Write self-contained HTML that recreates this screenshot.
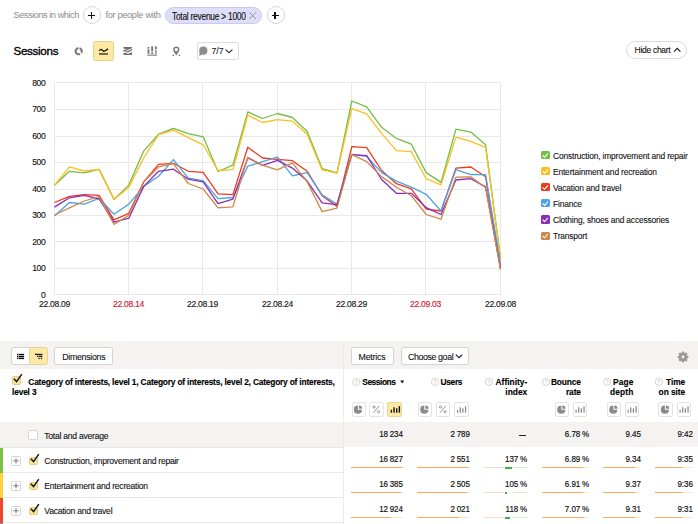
<!DOCTYPE html>
<html><head><meta charset="utf-8">
<style>
html,body{margin:0;padding:0;}
body{width:698px;height:524px;overflow:hidden;position:relative;background:#fff;font-family:"Liberation Sans",sans-serif;color:#000;}
.a{position:absolute;white-space:nowrap;line-height:1;}
.chart,.ico{position:absolute;left:0;top:0;}
.gray{color:#8c8c8c;}
.circ{position:absolute;width:18px;height:18px;border:1px solid #d6d6d6;border-radius:50%;box-sizing:border-box;background:#fff;}
.circ:before{content:"";position:absolute;left:4px;top:7.3px;width:7.2px;height:1.3px;background:#111;}
.circ:after{content:"";position:absolute;left:6.95px;top:4.35px;width:1.3px;height:7.2px;background:#111;}
.pill{position:absolute;left:165px;top:7px;width:97px;height:17px;box-sizing:border-box;border:1px solid #c9c9f2;background:#dedef9;border-radius:9px;}
.btn{position:absolute;box-sizing:border-box;border:1px solid #d3d3d3;border-radius:2.5px;background:#fff;}
.legend .it{position:absolute;left:541px;height:10px;}
.legend .cb{position:absolute;left:0;top:0;width:8.5px;height:8.2px;border-radius:1.5px;}
.legend .tx{position:absolute;white-space:nowrap;left:12px;top:-0.2px;font-size:8.4px;color:#111;-webkit-text-stroke:0.1px #111;letter-spacing:-0.15px;line-height:1.2;}
.toolbar{position:absolute;left:0;top:341px;width:698px;height:28px;background:#f4f3f1;}
.vline{position:absolute;left:342.6px;top:341px;width:1px;height:183px;background:#ebebeb;}
.totrow{position:absolute;left:0;top:422px;width:698px;height:25px;background:#f4f3f1;}
.hl{position:absolute;left:0;width:343px;height:1px;background:#e8e8e8;}
.strip{position:absolute;left:0;width:2.5px;height:25px;}
.txt{position:absolute;font-size:8.6px;letter-spacing:-0.26px;color:#111;-webkit-text-stroke:0.1px #111;white-space:nowrap;line-height:1;}
.num{position:absolute;font-size:9.9px;letter-spacing:0px;-webkit-text-stroke:0.2px #111;transform:scaleX(0.81);transform-origin:100% 0;color:#111;text-align:right;white-space:nowrap;line-height:1;width:60px;}
.bar{position:absolute;height:2px;background:#f9a862;}
.barl{position:absolute;height:2px;background:#fde4cf;}
.mh{position:absolute;font-size:8.4px;font-weight:bold;color:#000;-webkit-text-stroke:0.12px #000;white-space:nowrap;line-height:10px;}
.sb{position:absolute;top:402px;width:14.5px;height:14.5px;box-sizing:border-box;border:1px solid #e3e3e3;border-radius:2px;background:#fff;}
.ex{position:absolute;left:11px;width:9.5px;height:9.5px;box-sizing:border-box;border:1px solid #d4d4d4;border-radius:1.5px;background:#fff;}
.ck{position:absolute;left:29px;width:8.5px;height:8.5px;box-sizing:border-box;border:1px solid #e6cf7c;border-radius:1.5px;background:#f9e49b;}
</style></head><body>

<svg class="chart" width="698" height="330" viewBox="0 0 698 330">
<g stroke="#e8e8e8" stroke-width="1"><line x1="54" y1="294.5" x2="501" y2="294.5"/><line x1="54" y1="268.5" x2="501" y2="268.5"/><line x1="54" y1="241.5" x2="501" y2="241.5"/><line x1="54" y1="215.5" x2="501" y2="215.5"/><line x1="54" y1="189.5" x2="501" y2="189.5"/><line x1="54" y1="162.5" x2="501" y2="162.5"/><line x1="54" y1="136.5" x2="501" y2="136.5"/><line x1="54" y1="109.5" x2="501" y2="109.5"/><line x1="54" y1="82.5" x2="501" y2="82.5"/><line x1="54.5" y1="82" x2="54.5" y2="295"/><line x1="128.5" y1="82" x2="128.5" y2="295"/><line x1="202.5" y1="82" x2="202.5" y2="295"/><line x1="277.5" y1="82" x2="277.5" y2="295"/><line x1="351.5" y1="82" x2="351.5" y2="295"/><line x1="425.5" y1="82" x2="425.5" y2="295"/><line x1="500.5" y1="82" x2="500.5" y2="295"/></g>
<g font-family="Liberation Sans, sans-serif" font-size="8.6" letter-spacing="-0.3" fill="#111" stroke="#111" stroke-width="0.12"><text x="45.6" y="297.7" text-anchor="end">0</text><text x="45.6" y="271.2" text-anchor="end">100</text><text x="45.6" y="244.7" text-anchor="end">200</text><text x="45.6" y="218.2" text-anchor="end">300</text><text x="45.6" y="191.7" text-anchor="end">400</text><text x="45.6" y="165.2" text-anchor="end">500</text><text x="45.6" y="138.7" text-anchor="end">600</text><text x="45.6" y="112.2" text-anchor="end">700</text><text x="45.6" y="85.7" text-anchor="end">800</text><text x="54.5" y="307" text-anchor="middle">22.08.09</text><text x="128.5" y="307" text-anchor="middle" fill="#d0112b" stroke="#d0112b">22.08.14</text><text x="202.5" y="307" text-anchor="middle">22.08.19</text><text x="277.5" y="307" text-anchor="middle">22.08.24</text><text x="351.5" y="307" text-anchor="middle">22.08.29</text><text x="425.5" y="307" text-anchor="middle" fill="#d0112b" stroke="#d0112b">22.09.03</text><text x="500.5" y="307" text-anchor="middle">22.09.08</text></g>
<polyline fill="none" stroke="#72bf44" stroke-width="1.3" stroke-linejoin="round" points="54.5,185.3 69.4,171.3 84.2,172.9 99.1,169.4 114.0,199.4 128.8,185.1 143.7,151.1 158.6,134.2 173.4,128.3 188.3,133.6 203.2,136.8 218.0,171.5 232.9,165.2 247.8,111.9 262.6,118.5 277.5,113.5 292.4,117.5 307.2,131.5 322.1,168.6 337.0,172.9 351.8,101.0 366.7,106.9 381.6,127.3 396.4,138.4 411.3,144.2 426.2,172.6 441.0,182.4 455.9,129.1 470.8,132.1 485.6,144.8 500.5,258.7"/>
<polyline fill="none" stroke="#fbbf1f" stroke-width="1.3" stroke-linejoin="round" points="54.5,185.3 69.4,166.8 84.2,171.0 99.1,169.4 114.0,199.4 128.8,187.4 143.7,158.0 158.6,134.7 173.4,130.2 188.3,137.6 203.2,144.8 218.0,170.5 232.9,169.7 247.8,115.1 262.6,122.5 277.5,119.6 292.4,121.2 307.2,134.2 322.1,169.9 337.0,173.1 351.8,108.7 366.7,113.8 381.6,133.4 396.4,150.6 411.3,151.7 426.2,178.7 441.0,184.8 455.9,137.1 470.8,141.3 485.6,147.4 500.5,257.9"/>
<polyline fill="none" stroke="#f0391b" stroke-width="1.3" stroke-linejoin="round" points="54.5,202.5 69.4,196.4 84.2,194.6 99.1,195.4 114.0,219.8 128.8,213.4 143.7,181.9 158.6,164.4 173.4,163.3 188.3,171.3 203.2,172.3 218.0,193.8 232.9,194.6 247.8,147.2 262.6,158.0 277.5,159.3 292.4,160.7 307.2,171.3 322.1,195.7 337.0,206.5 351.8,146.6 366.7,147.7 381.6,170.5 396.4,183.7 411.3,188.8 426.2,209.2 441.0,211.0 455.9,168.1 470.8,167.0 485.6,176.8 500.5,268.0"/>
<polyline fill="none" stroke="#4ca3e6" stroke-width="1.3" stroke-linejoin="round" points="54.5,216.1 69.4,202.5 84.2,204.1 99.1,198.3 114.0,214.2 128.8,204.1 143.7,186.4 158.6,176.3 173.4,159.6 188.3,178.2 203.2,180.6 218.0,198.6 232.9,197.5 247.8,166.2 262.6,161.7 277.5,157.2 292.4,175.8 307.2,172.6 322.1,194.9 337.0,204.1 351.8,154.3 366.7,156.4 381.6,172.6 396.4,181.1 411.3,187.2 426.2,194.3 441.0,211.0 455.9,169.7 470.8,174.7 485.6,174.7 500.5,264.0"/>
<polyline fill="none" stroke="#8c2bb5" stroke-width="1.3" stroke-linejoin="round" points="54.5,207.1 69.4,197.8 84.2,195.4 99.1,198.8 114.0,222.2 128.8,218.2 143.7,186.4 158.6,171.3 173.4,169.2 188.3,179.2 203.2,181.9 218.0,203.6 232.9,199.1 247.8,158.0 262.6,165.4 277.5,160.4 292.4,168.1 307.2,181.1 322.1,202.8 337.0,204.7 351.8,154.6 366.7,155.6 381.6,179.5 396.4,193.3 411.3,193.3 426.2,207.6 441.0,214.5 455.9,180.0 470.8,178.7 485.6,186.9 500.5,268.5"/>
<polyline fill="none" stroke="#d0884a" stroke-width="1.3" stroke-linejoin="round" points="54.5,215.0 69.4,207.8 84.2,201.0 99.1,196.7 114.0,224.5 128.8,215.3 143.7,182.1 158.6,166.8 173.4,163.6 188.3,183.5 203.2,189.0 218.0,207.8 232.9,206.8 247.8,157.2 262.6,165.4 277.5,169.9 292.4,162.8 307.2,181.9 322.1,211.6 337.0,208.1 351.8,154.6 366.7,161.7 381.6,176.6 396.4,187.2 411.3,195.7 426.2,214.5 441.0,219.2 455.9,177.1 470.8,176.8 485.6,187.7 500.5,269.6"/>
</svg>

<!-- top row -->
<div class="a gray" style="left:13.5px;top:10.5px;font-size:9.2px;letter-spacing:-0.45px;">Sessions in which</div>
<div class="circ" style="left:83px;top:6.4px;"></div>
<div class="a gray" style="left:105.5px;top:10.5px;font-size:9.2px;letter-spacing:-0.32px;">for people with</div>
<div class="pill"></div>
<div class="a" style="left:172px;top:11.7px;font-size:10px;color:#111;letter-spacing:-0.3px;-webkit-text-stroke:0.15px #111;transform:scaleX(0.84);transform-origin:0 0;">Total revenue &gt; 1000</div>
<div class="circ" style="left:266.5px;top:6.4px;"></div>

<!-- second row -->
<div class="a" style="left:13.5px;top:45.3px;font-size:11.6px;color:#000;letter-spacing:-0.3px;-webkit-text-stroke:0.35px #000;">Sessions</div>
<div class="btn" style="left:93px;top:41px;width:21px;height:20px;background:#fde9a6;border-color:#e6d185;"></div>
<div class="btn" style="left:196.5px;top:42px;width:42px;height:17.5px;border-color:#dcdcdc;"></div>
<div class="a" style="left:211.5px;top:46.5px;font-size:8.6px;color:#111;-webkit-text-stroke:0.1px #111;">7/7</div>
<div class="btn" style="left:626px;top:41px;width:60.5px;height:18px;border-radius:9px;border-color:#dadada;"></div>
<div class="a" style="left:634.5px;top:45.5px;font-size:8.6px;color:#111;letter-spacing:-0.33px;-webkit-text-stroke:0.1px #111;">Hide chart</div>

<div class="legend">
<div class="it" style="top:151px"><div class="cb" style="background:#72bf44"></div><div class="tx">Construction, improvement and repair</div></div>
<div class="it" style="top:167px"><div class="cb" style="background:#fbbf1f"></div><div class="tx">Entertainment and recreation</div></div>
<div class="it" style="top:183px"><div class="cb" style="background:#f0391b"></div><div class="tx">Vacation and travel</div></div>
<div class="it" style="top:199.2px"><div class="cb" style="background:#4ca3e6"></div><div class="tx">Finance</div></div>
<div class="it" style="top:215.4px"><div class="cb" style="background:#8c2bb5"></div><div class="tx">Clothing, shoes and accessories</div></div>
<div class="it" style="top:231.6px"><div class="cb" style="background:#d0884a"></div><div class="tx">Transport</div></div>
</div>

<!-- table toolbar -->
<div class="toolbar"></div>
<div class="btn" style="left:11px;top:347px;width:19px;height:18px;border-radius:3px 0 0 3px;"></div>
<div class="btn" style="left:29px;top:347px;width:19px;height:18px;border-radius:0 3px 3px 0;background:#fde9a6;border-color:#e8d48e;"></div>
<div class="btn" style="left:54px;top:347px;width:59px;height:18px;"></div>
<div class="txt" style="left:62.3px;top:353px;font-size:8.8px;letter-spacing:-0.3px;">Dimensions</div>
<div class="btn" style="left:351px;top:347px;width:42.5px;height:18px;"></div>
<div class="txt" style="left:358.5px;top:353px;font-size:8.8px;letter-spacing:-0.2px;">Metrics</div>
<div class="btn" style="left:400.5px;top:347px;width:68px;height:18px;"></div>
<div class="txt" style="left:408px;top:353px;font-size:8.8px;letter-spacing:-0.38px;">Choose goal</div>
<div class="vline"></div>

<!-- header -->
<div class="ck" style="left:12px;top:376.1px;width:8.7px;height:8.8px;"></div>
<div class="mh" style="left:28.3px;top:376.9px;letter-spacing:-0.2px;">Category of interests, level 1, Category of interests, level 2, Category of interests,</div>
<div class="mh" style="left:12px;top:386.9px;letter-spacing:-0.17px;">level 3</div>

<div class="mh" style="left:362.3px;top:376.9px;letter-spacing:-0.46px;">Sessions</div>
<div class="mh" style="left:440.6px;top:376.9px;letter-spacing:-0.35px;">Users</div>
<div class="mh" style="right:170.8px;top:376.9px;text-align:right;letter-spacing:0px;">Affinity-<br>index</div>
<div class="mh" style="right:117.2px;top:376.9px;text-align:right;letter-spacing:-0.14px;">Bounce<br>rate</div>
<div class="mh" style="right:64.6px;top:376.9px;text-align:right;letter-spacing:0.1px;">Page<br>depth</div>
<div class="mh" style="right:12.8px;top:376.9px;text-align:right;letter-spacing:-0.05px;">Time<br>on site</div>

<div class="sb" style="left:351.5px;"></div><div class="sb" style="left:369px;"></div><div class="sb" style="left:387px;background:#fde9a6;border-color:#ead68f;"></div>
<div class="sb" style="left:417.5px;"></div><div class="sb" style="left:435.5px;"></div><div class="sb" style="left:454px;"></div>
<div class="sb" style="left:554.5px;"></div><div class="sb" style="left:572.5px;"></div>
<div class="sb" style="left:606.5px;"></div><div class="sb" style="left:624.5px;"></div>
<div class="sb" style="left:658px;"></div><div class="sb" style="left:676.5px;"></div>

<!-- rows -->
<div class="totrow"></div>
<div class="hl" style="top:447px;"></div>
<div class="hl" style="top:472px;"></div>
<div class="hl" style="top:497px;"></div>
<div class="hl" style="top:522px;"></div>
<div class="vline" style="top:369px;height:155px;"></div>

<div class="strip" style="top:447.5px;background:#7cc142;"></div>
<div class="strip" style="top:472.5px;background:#ffd13b;"></div>
<div class="strip" style="top:497.5px;background:#f1462b;"></div>
<div class="strip" style="top:522.5px;background:#4ca3e6;"></div>

<div class="ex" style="left:28.2px;top:430px;width:9.6px;height:9.6px;border-color:#d6d6d6;border-radius:2px;"></div>
<div class="txt" style="left:44.3px;top:431.6px;">Total and average</div>
<div class="num" style="left:343px;top:429.0px;">18&#8239;234</div>
<div class="num" style="left:409.5px;top:429.0px;">2&#8239;789</div>
<div style="position:absolute;left:519.2px;top:434.6px;width:7px;height:1.3px;background:#222;"></div>
<div class="num" style="left:529px;top:429.0px;">6.78&#8239;%</div>
<div class="num" style="left:580.5px;top:429.0px;">9.45</div>
<div class="num" style="left:632.5px;top:429.0px;">9:42</div>

<div class="ex" style="top:456px;"></div><div class="ck" style="top:456.5px;"></div>
<div class="txt" style="left:44.3px;top:457px;">Construction, improvement and repair</div>
<div class="num" style="left:343px;top:453.5px;">16&#8239;827</div>
<div class="num" style="left:409.5px;top:453.5px;">2&#8239;551</div>
<div class="num" style="left:467px;top:453.5px;">137&#8239;%</div>
<div class="num" style="left:529px;top:453.5px;">6.89&#8239;%</div>
<div class="num" style="left:580.5px;top:453.5px;">9.34</div>
<div class="num" style="left:632.5px;top:453.5px;">9:35</div>

<div class="ex" style="top:481px;"></div><div class="ck" style="top:481.5px;"></div>
<div class="txt" style="left:44.3px;top:482px;">Entertainment and recreation</div>
<div class="num" style="left:343px;top:478.5px;">16&#8239;385</div>
<div class="num" style="left:409.5px;top:478.5px;">2&#8239;505</div>
<div class="num" style="left:467px;top:478.5px;">105&#8239;%</div>
<div class="num" style="left:529px;top:478.5px;">6.91&#8239;%</div>
<div class="num" style="left:580.5px;top:478.5px;">9.37</div>
<div class="num" style="left:632.5px;top:478.5px;">9:36</div>

<div class="ex" style="top:506px;"></div><div class="ck" style="top:506.5px;"></div>
<div class="txt" style="left:44.3px;top:507px;">Vacation and travel</div>
<div class="num" style="left:343px;top:503.5px;">12&#8239;924</div>
<div class="num" style="left:409.5px;top:503.5px;">2&#8239;021</div>
<div class="num" style="left:467px;top:503.5px;">118&#8239;%</div>
<div class="num" style="left:529px;top:503.5px;">7.07&#8239;%</div>
<div class="num" style="left:580.5px;top:503.5px;">9.31</div>
<div class="num" style="left:632.5px;top:503.5px;">9:31</div>

<div class="barl" style="left:350.8px;top:466.7px;width:51.9px;height:1.7px;"></div>
<div class="bar" style="left:350.8px;top:466.7px;width:51.9px;height:1.7px;"></div>
<div class="barl" style="left:417.4px;top:466.7px;width:51.6px;height:1.7px;"></div>
<div class="bar" style="left:417.4px;top:466.7px;width:51.6px;height:1.7px;"></div>
<div class="bar" style="left:484.3px;top:467.0px;width:19.9px;height:1.3px;background:#fcd6cf;"></div>
<div class="bar" style="left:512.8px;top:467.0px;width:13.8px;height:1.3px;background:#d5ecca;"></div>
<div class="bar" style="left:505px;top:466.7px;width:6.9px;height:2px;background:#3cb14a;"></div>
<div class="barl" style="left:541.9px;top:466.7px;width:46.4px;height:1.7px;"></div>
<div class="bar" style="left:541.9px;top:466.7px;width:40.8px;height:1.7px;"></div>
<div class="barl" style="left:603.3px;top:466.7px;width:36.7px;height:1.7px;"></div>
<div class="bar" style="left:603.3px;top:466.7px;width:31.7px;height:1.7px;"></div>
<div class="barl" style="left:654.9px;top:466.7px;width:37.1px;height:1.7px;"></div>
<div class="bar" style="left:654.9px;top:466.7px;width:27.4px;height:1.7px;"></div>
<div class="barl" style="left:350.8px;top:491.7px;width:51.9px;height:1.7px;"></div>
<div class="bar" style="left:350.8px;top:491.7px;width:50.6px;height:1.7px;"></div>
<div class="barl" style="left:417.4px;top:491.7px;width:51.6px;height:1.7px;"></div>
<div class="bar" style="left:417.4px;top:491.7px;width:50.7px;height:1.7px;"></div>
<div class="bar" style="left:484.3px;top:492.0px;width:19.9px;height:1.3px;background:#fcd6cf;"></div>
<div class="bar" style="left:512.8px;top:492.0px;width:13.8px;height:1.3px;background:#d5ecca;"></div>
<div class="bar" style="left:505px;top:491.7px;width:1.5px;height:2px;background:#3cb14a;"></div>
<div class="barl" style="left:541.9px;top:491.7px;width:46.4px;height:1.7px;"></div>
<div class="bar" style="left:541.9px;top:491.7px;width:40.8px;height:1.7px;"></div>
<div class="barl" style="left:603.3px;top:491.7px;width:36.7px;height:1.7px;"></div>
<div class="bar" style="left:603.3px;top:491.7px;width:31.7px;height:1.7px;"></div>
<div class="barl" style="left:654.9px;top:491.7px;width:37.1px;height:1.7px;"></div>
<div class="bar" style="left:654.9px;top:491.7px;width:27.4px;height:1.7px;"></div>
<div class="barl" style="left:350.8px;top:516.7px;width:51.9px;height:1.7px;"></div>
<div class="bar" style="left:350.8px;top:516.7px;width:40.0px;height:1.7px;"></div>
<div class="barl" style="left:417.4px;top:516.7px;width:51.6px;height:1.7px;"></div>
<div class="bar" style="left:417.4px;top:516.7px;width:41.4px;height:1.7px;"></div>
<div class="bar" style="left:484.3px;top:517.0px;width:19.9px;height:1.3px;background:#fcd6cf;"></div>
<div class="bar" style="left:512.8px;top:517.0px;width:13.8px;height:1.3px;background:#d5ecca;"></div>
<div class="bar" style="left:505px;top:516.7px;width:4.5px;height:2px;background:#3cb14a;"></div>
<div class="barl" style="left:541.9px;top:516.7px;width:46.4px;height:1.7px;"></div>
<div class="bar" style="left:541.9px;top:516.7px;width:42.4px;height:1.7px;"></div>
<div class="barl" style="left:603.3px;top:516.7px;width:36.7px;height:1.7px;"></div>
<div class="bar" style="left:603.3px;top:516.7px;width:31.7px;height:1.7px;"></div>
<div class="barl" style="left:654.9px;top:516.7px;width:37.1px;height:1.7px;"></div>
<div class="bar" style="left:654.9px;top:516.7px;width:27.4px;height:1.7px;"></div>
<svg class="ico" width="698" height="524" viewBox="0 0 698 524">
<circle cx="78.7" cy="51.2" r="3.1" fill="none" stroke="#7a7a7a" stroke-width="2.1" stroke-dasharray="5.68 1.62 10.55 1.62" transform="rotate(-75 78.7 51.2)"/>
<polyline points="99,50.7 101.2,49.3 103.6,51.3 105.6,50.6 108,48.9" fill="none" stroke="#1e1a10" stroke-width="1.3" stroke-linejoin="round"/>
<rect x="99" y="53" width="9" height="1.9" fill="#6f6236"/>
<g fill="#6f6f6f"><path d="M123.4 46.9 H131.9 V48.2 L127.6 49.9 L123.4 48.2 Z"/><path d="M123.4 53.4 L125.4 52.6 L128 53.9 L131.9 51.9 V54.9 H123.4 Z"/></g><polyline points="123.4,51 125.4,50.3 127.8,52 131.9,49.5" fill="none" stroke="#6f6f6f" stroke-width="1.4"/>
<g fill="#7a7a7a"><rect x="147.5" y="47" width="1.9" height="1.6"/><rect x="147.5" y="49.4" width="1.9" height="4.4"/><rect x="151.2" y="46.3" width="1.9" height="5"/><rect x="151.2" y="52" width="1.9" height="1.8"/><rect x="154.9" y="46.3" width="1.9" height="3"/><rect x="154.9" y="50.4" width="1.9" height="1.4"/><rect x="154.9" y="52.4" width="1.9" height="1.4"/><rect x="147.2" y="54.6" width="9.8" height="1.1"/></g>
<g fill="none" stroke="#7a7a7a" stroke-width="1.4"><circle cx="176.3" cy="49.6" r="2.4"/><path d="M174.6 51.6 L176.3 54.2 L178 51.6"/></g><path d="M172.2 55.9 L173.4 54.3 L174.4 55.9 Z M178.2 55.9 L179.2 54.3 L180.4 55.9 Z" fill="#7a7a7a"/>
<circle cx="203.3" cy="50.7" r="4.1" fill="#8c8c8c"/><path d="M199.6 52.6 L199.3 56 L202.6 54.2 Z" fill="#8c8c8c"/>
<polyline points="225.6,49.6 229,52.6 232.4,49.6" fill="none" stroke="#333" stroke-width="1.2"/>
<polyline points="674,51.6 677.2,48.4 680.4,51.6" fill="none" stroke="#222" stroke-width="1.2"/>
<g stroke="#8f8f8f" stroke-width="0.9"><line x1="249.3" y1="12.3" x2="256" y2="19"/><line x1="256" y1="12.3" x2="249.3" y2="19"/></g>
<g fill="#111"><rect x="17" y="353.8" width="1.4" height="1.4"/><rect x="17" y="355.8" width="1.4" height="1.4"/><rect x="17" y="357.7" width="1.4" height="1.4"/><rect x="18.9" y="353.8" width="5.2" height="1.4"/><rect x="18.9" y="355.8" width="5.2" height="1.4"/><rect x="18.9" y="357.7" width="5.2" height="1.4"/></g>
<g fill="#111"><rect x="35" y="353.6" width="1.5" height="1.5"/><rect x="36.6" y="353.8" width="5.8" height="1.3"/><rect x="37" y="355.8" width="1.2" height="1.2"/><rect x="38.8" y="355.8" width="3.6" height="1.2"/><rect x="38.4" y="357.8" width="1.3" height="1.3"/><rect x="40.8" y="357.8" width="1.3" height="1.3"/></g>
<g transform="translate(683,357)" fill="#9a9a9a"><circle r="6.8" fill="#fbfbfa" opacity="0.7"/><rect x="-1.3" y="-5.4" width="2.6" height="2.8" transform="rotate(0)"/><rect x="-1.3" y="-5.4" width="2.6" height="2.8" transform="rotate(45)"/><rect x="-1.3" y="-5.4" width="2.6" height="2.8" transform="rotate(90)"/><rect x="-1.3" y="-5.4" width="2.6" height="2.8" transform="rotate(135)"/><rect x="-1.3" y="-5.4" width="2.6" height="2.8" transform="rotate(180)"/><rect x="-1.3" y="-5.4" width="2.6" height="2.8" transform="rotate(225)"/><rect x="-1.3" y="-5.4" width="2.6" height="2.8" transform="rotate(270)"/><rect x="-1.3" y="-5.4" width="2.6" height="2.8" transform="rotate(315)"/><circle r="3.9"/><circle r="1.4" fill="#f4f3f1"/></g>
<polyline points="455.8,354.6 459,357.7 462.2,354.6" fill="none" stroke="#222" stroke-width="1.2"/>
<circle cx="356.3" cy="381.8" r="3.6" fill="none" stroke="#cfcfcf" stroke-width="0.9"/><text x="356.3" y="384.1" font-family="Liberation Sans" font-size="5.5" fill="#c4c4c4" text-anchor="middle">?</text>
<circle cx="435" cy="381.8" r="3.6" fill="none" stroke="#cfcfcf" stroke-width="0.9"/><text x="435" y="384.1" font-family="Liberation Sans" font-size="5.5" fill="#c4c4c4" text-anchor="middle">?</text>
<circle cx="489" cy="381.8" r="3.6" fill="none" stroke="#cfcfcf" stroke-width="0.9"/><text x="489" y="384.1" font-family="Liberation Sans" font-size="5.5" fill="#c4c4c4" text-anchor="middle">?</text>
<circle cx="546.1" cy="381.8" r="3.6" fill="none" stroke="#cfcfcf" stroke-width="0.9"/><text x="546.1" y="384.1" font-family="Liberation Sans" font-size="5.5" fill="#c4c4c4" text-anchor="middle">?</text>
<circle cx="607.2" cy="381.8" r="3.6" fill="none" stroke="#cfcfcf" stroke-width="0.9"/><text x="607.2" y="384.1" font-family="Liberation Sans" font-size="5.5" fill="#c4c4c4" text-anchor="middle">?</text>
<circle cx="658.9" cy="381.8" r="3.6" fill="none" stroke="#cfcfcf" stroke-width="0.9"/><text x="658.9" y="384.1" font-family="Liberation Sans" font-size="5.5" fill="#c4c4c4" text-anchor="middle">?</text>
<path d="M400.2 380.4 H404.2 L402.2 383.6 Z" fill="#111"/>
<g fill="#8a8a8a"><path d="M357.9 409.7 L357.9 405.59999999999997 A4.1 4.1 0 1 0 362.0 409.7 Z"/><path d="M358.9 408.7 L358.9 405.4 A3.3 3.3 0 0 1 362.2 408.7 Z"/></g>
<g stroke="#8a8a8a" stroke-width="0.9" fill="none"><line x1="379.1" y1="405.8" x2="373.5" y2="412.8"/><circle cx="374.0" cy="407.0" r="1.1"/><circle cx="378.6" cy="411.7" r="1.1"/></g>
<g fill="#111"><rect x="390.70" y="409.80" width="1.4" height="2.9"/><rect x="393.35" y="407.30" width="1.4" height="5.4"/><rect x="396.00" y="408.30" width="1.4" height="4.4"/><rect x="398.65" y="406.20" width="1.4" height="6.5"/></g>
<g fill="#8a8a8a"><path d="M424.3 409.7 L424.3 405.59999999999997 A4.1 4.1 0 1 0 428.40000000000003 409.7 Z"/><path d="M425.3 408.7 L425.3 405.4 A3.3 3.3 0 0 1 428.6 408.7 Z"/></g>
<g stroke="#8a8a8a" stroke-width="0.9" fill="none"><line x1="445.6" y1="405.8" x2="440.0" y2="412.8"/><circle cx="440.5" cy="407.0" r="1.1"/><circle cx="445.1" cy="411.7" r="1.1"/></g>
<g fill="#858585"><rect x="457.00" y="409.80" width="1.2" height="2.9"/><rect x="459.65" y="407.30" width="1.2" height="5.4"/><rect x="462.30" y="408.30" width="1.2" height="4.4"/><rect x="464.95" y="406.20" width="1.2" height="6.5"/></g>
<g fill="#8a8a8a"><path d="M561.3 409.7 L561.3 405.59999999999997 A4.1 4.1 0 1 0 565.4 409.7 Z"/><path d="M562.3 408.7 L562.3 405.4 A3.3 3.3 0 0 1 565.5999999999999 408.7 Z"/></g>
<g fill="#858585"><rect x="575.50" y="409.80" width="1.2" height="2.9"/><rect x="578.15" y="407.30" width="1.2" height="5.4"/><rect x="580.80" y="408.30" width="1.2" height="4.4"/><rect x="583.45" y="406.20" width="1.2" height="6.5"/></g>
<g fill="#8a8a8a"><path d="M613.3 409.7 L613.3 405.59999999999997 A4.1 4.1 0 1 0 617.4 409.7 Z"/><path d="M614.3 408.7 L614.3 405.4 A3.3 3.3 0 0 1 617.5999999999999 408.7 Z"/></g>
<g fill="#858585"><rect x="627.50" y="409.80" width="1.2" height="2.9"/><rect x="630.15" y="407.30" width="1.2" height="5.4"/><rect x="632.80" y="408.30" width="1.2" height="4.4"/><rect x="635.45" y="406.20" width="1.2" height="6.5"/></g>
<g fill="#8a8a8a"><path d="M664.9 409.7 L664.9 405.59999999999997 A4.1 4.1 0 1 0 669.0 409.7 Z"/><path d="M665.9 408.7 L665.9 405.4 A3.3 3.3 0 0 1 669.1999999999999 408.7 Z"/></g>
<g fill="#858585"><rect x="679.50" y="409.80" width="1.2" height="2.9"/><rect x="682.15" y="407.30" width="1.2" height="5.4"/><rect x="684.80" y="408.30" width="1.2" height="4.4"/><rect x="687.45" y="406.20" width="1.2" height="6.5"/></g>
<polyline points="13.8,378.7 16.6,381.6 21.8,374.2" fill="none" stroke="#111" stroke-width="1.45"/>
<polyline points="30.8,458.7 33.6,461.6 38.8,454.2" fill="none" stroke="#111" stroke-width="1.45"/>
<g fill="#8a8a8a"><rect x="13.4" y="460.15" width="5.2" height="1.2"/><rect x="15.4" y="458.15" width="1.2" height="5.2"/></g>
<polyline points="30.8,483.7 33.6,486.6 38.8,479.2" fill="none" stroke="#111" stroke-width="1.45"/>
<g fill="#8a8a8a"><rect x="13.4" y="485.15" width="5.2" height="1.2"/><rect x="15.4" y="483.15" width="1.2" height="5.2"/></g>
<polyline points="30.8,508.7 33.6,511.6 38.8,504.2" fill="none" stroke="#111" stroke-width="1.45"/>
<g fill="#8a8a8a"><rect x="13.4" y="510.15" width="5.2" height="1.2"/><rect x="15.4" y="508.15" width="1.2" height="5.2"/></g>
<polyline points="542.6,155.3 544.6,157.2 548,153.4" fill="none" stroke="#fff" stroke-width="1.1"/>
<polyline points="542.6,171.3 544.6,173.2 548,169.4" fill="none" stroke="#fff" stroke-width="1.1"/>
<polyline points="542.6,187.3 544.6,189.2 548,185.4" fill="none" stroke="#fff" stroke-width="1.1"/>
<polyline points="542.6,203.5 544.6,205.39999999999998 548,201.6" fill="none" stroke="#fff" stroke-width="1.1"/>
<polyline points="542.6,219.70000000000002 544.6,221.6 548,217.8" fill="none" stroke="#fff" stroke-width="1.1"/>
<polyline points="542.6,235.9 544.6,237.79999999999998 548,234.0" fill="none" stroke="#fff" stroke-width="1.1"/>
</svg>
</body></html>
